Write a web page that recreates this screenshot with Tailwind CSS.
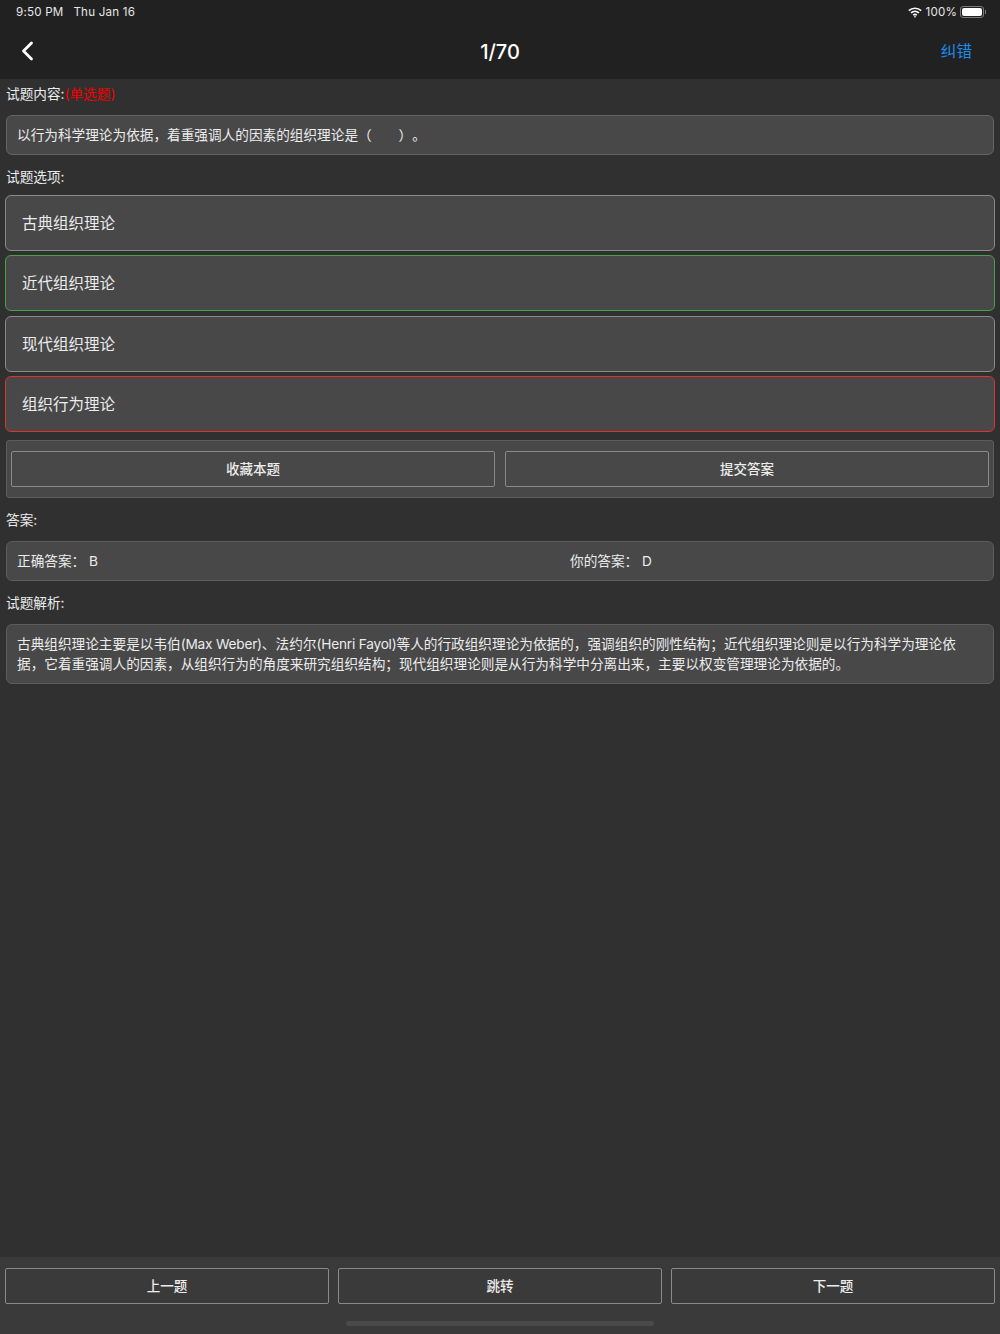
<!DOCTYPE html>
<html lang="zh-CN">
<head>
  <meta charset="UTF-8">
  <meta name="viewport" content="width=device-width, initial-scale=1.0">
  <title>1/70</title>
  <script src="https://cdn.jsdelivr.net/npm/@tailwindcss/browser@4"></script>
</head>
<body class="bg-[#303030] font-['Inter','Noto_Sans_CJK_SC',sans-serif] text-[#ececec] overflow-hidden [text-spacing-trim:space-all]">
  <div class="flex flex-col h-[1334px] w-[1000px]">

    <!-- Status bar + nav -->
    <header class="h-[79px] shrink-0 bg-[#212121]">
      <div class="h-[25px] flex items-center justify-between pl-4 pr-[14px] text-[11.6px] text-[#e6e6e6]">
        <div class="flex gap-[10px] tracking-[0.2px]"><span>9:50 PM</span><span>Thu Jan 16</span></div>
        <div class="flex items-center gap-[3px]">
          <svg width="14" height="11" viewBox="0 0 14 11" fill="none" stroke="#fff" stroke-width="1.6" stroke-linecap="butt">
            <path d="M0.8 3.6C4.2 0.4 9.8 0.4 13.2 3.6"/>
            <path d="M3 5.9C5.3 3.9 8.7 3.9 11 5.9"/>
            <path d="M5.2 8.1C6.3 7.2 7.7 7.2 8.8 8.1"/>
            <path d="M7 10.8L5.8 9.5C6.5 9 7.5 9 8.2 9.5Z" fill="#fff" stroke="none"/>
          </svg>
          <span class="tracking-[0.2px]">100%</span>
          <div class="flex items-center">
            <div class="w-[24px] h-[12px] rounded-[3px] border border-[#7a7a7a] p-[1px]"><div class="w-full h-full rounded-[2px] bg-white"></div></div>
            <div class="w-[1px] h-[4px] bg-[#7a7a7a] ml-[1px]"></div>
          </div>
        </div>
      </div>
      <div class="relative h-[53px] flex items-center justify-between pl-[21px] pr-[28px]">
        <svg class="mb-[1px]" width="13" height="20" viewBox="0 0 13 20" fill="none" stroke="#fff" stroke-width="2.8" stroke-linecap="round" stroke-linejoin="round">
          <path d="M10.5 2L2.5 10L10.5 18"/>
        </svg>
        <span class="absolute left-0 right-0 text-center text-[20px] font-medium text-white pointer-events-none">1/70</span>
        <span class="text-[15.6px] text-[#1a8cf0]">纠错</span>
      </div>
    </header>

    <!-- Question -->
    <main class="flex-1 flex flex-col px-[6px]">
      <div class="h-[36px] pt-[5px] text-[13.65px] leading-[20px]">试题内容:<span class="text-[#f00000]">(单选题)</span></div>
      <div class="h-[40px] flex items-center px-[10px] rounded-[6px] border border-[#636363] bg-[#484848] text-[13.65px]">以行为科学理论为依据，着重强调人的因素的组织理论是（&nbsp;&nbsp;&nbsp;&nbsp;&nbsp;&nbsp;&nbsp;）。</div>

      <div class="h-[40px] pt-[12px] text-[13.65px] leading-[20px]">试题选项:</div>
      <div class="flex flex-col -mx-[1px]">
        <div class="h-[56px] flex items-center px-[16px] pt-[1px] rounded-[6px] border border-[#8a8a8a] bg-[#484848] text-[15.5px]">古典组织理论</div>
        <div class="mt-[4px] h-[56px] flex items-center px-[16px] pt-[1px] rounded-[6px] border border-[#46a24a] bg-[#484848] text-[15.5px]">近代组织理论</div>
        <div class="mt-[5px] h-[56px] flex items-center px-[16px] pt-[1px] rounded-[6px] border border-[#8a8a8a] bg-[#484848] text-[15.5px]">现代组织理论</div>
        <div class="mt-[4px] h-[56px] flex items-center px-[16px] pt-[1px] rounded-[6px] border border-[#e03030] bg-[#484848] text-[15.5px]">组织行为理论</div>
      </div>

      <div class="mt-[8px] h-[58px] flex items-center gap-[10px] px-[4px] rounded-[3px] border border-[#5c5c5c] bg-[#484848]">
        <button class="flex-1 h-[36px] rounded-[2px] border border-[#8a8a8a] text-[13.5px] font-medium">收藏本题</button>
        <button class="flex-1 h-[36px] rounded-[2px] border border-[#8a8a8a] text-[13.5px] font-medium">提交答案</button>
      </div>

      <div class="h-[43px] pt-[12px] text-[13.65px] leading-[20px]">答案:</div>
      <div class="h-[40px] flex items-center px-[10px] rounded-[6px] border border-[#5c5c5c] bg-[#484848] text-[13.65px]">
        <span class="w-[553px]">正确答案：&nbsp;B</span>
        <span>你的答案：&nbsp;D</span>
      </div>

      <div class="h-[43px] pt-[12px] text-[13.65px] leading-[20px]">试题解析:</div>
      <div class="h-[60px] flex items-center px-[10px] rounded-[6px] border border-[#5c5c5c] bg-[#484848] text-[13.65px] leading-[20px]">
        <p>古典组织理论主要是以韦伯<span class="tracking-[-0.2px]">(Max Weber)</span>、法约尔<span class="tracking-[-0.2px]">(Henri Fayol)</span>等人的行政组织理论为依据的，强调组织的刚性结构；近代组织理论则是以行为科学为理论依<br>据，它着重强调人的因素，从组织行为的角度来研究组织结构；现代组织理论则是从行为科学中分离出来，主要以权变管理理论为依据的。</p>
      </div>
    </main>

    <!-- Bottom bar -->
    <footer class="relative h-[77px] shrink-0 bg-[#3a3a3a] pt-[11px] px-[5px]">
      <div class="flex gap-[9px]">
        <button class="flex-1 h-[36px] rounded-[2px] border border-[#8a8a8a] text-[13.5px] font-medium">上一题</button>
        <button class="flex-1 h-[36px] rounded-[2px] border border-[#8a8a8a] text-[13.5px] font-medium">跳转</button>
        <button class="flex-1 h-[36px] rounded-[2px] border border-[#8a8a8a] text-[13.5px] font-medium">下一题</button>
      </div>
      <div class="absolute left-[346px] bottom-[8px] w-[308px] h-[5px] rounded-full bg-[#4a4a4a]"></div>
    </footer>
  </div>
</body>
</html>
